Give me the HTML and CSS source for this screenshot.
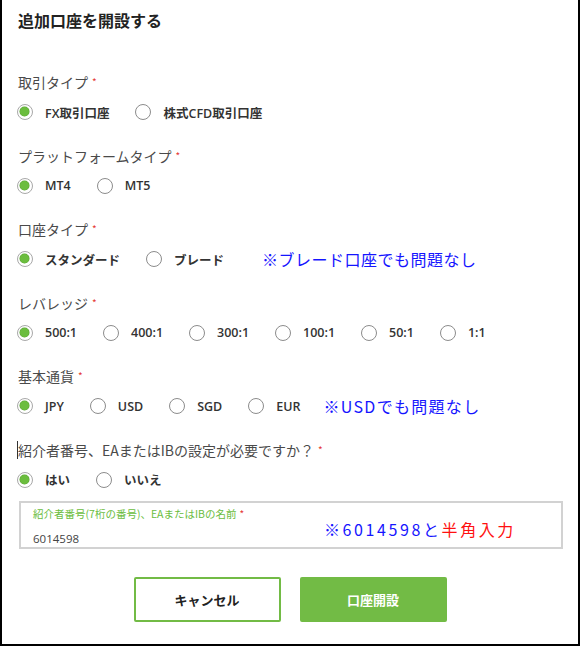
FILE: index.html
```html
<!DOCTYPE html>
<html lang="ja">
<head>
<meta charset="utf-8">
<title>追加口座を開設する</title>
<link rel="stylesheet" href="styles.css">
</head>
<body>
<div class="frame">
  <h1 class="title">追加口座を開設する</h1>

  <div class="group">
    <div class="label">取引タイプ<span class="req">*</span></div>
    <div class="options">
      <label class="opt"><span class="radio checked"></span>FX取引口座</label>
      <label class="opt"><span class="radio"></span>株式CFD取引口座</label>
    </div>
  </div>

  <div class="group">
    <div class="label">プラットフォームタイプ<span class="req">*</span></div>
    <div class="options">
      <label class="opt"><span class="radio checked"></span>MT4</label>
      <label class="opt"><span class="radio"></span>MT5</label>
    </div>
  </div>

  <div class="group">
    <div class="label">口座タイプ<span class="req">*</span></div>
    <div class="options">
      <label class="opt"><span class="radio checked"></span>スタンダード</label>
      <label class="opt"><span class="radio"></span>ブレード</label>
      <span class="note note-blade">※ブレード口座でも問題なし</span>
    </div>
  </div>

  <div class="group">
    <div class="label">レバレッジ<span class="req">*</span></div>
    <div class="options">
      <label class="opt"><span class="radio checked"></span>500:1</label>
      <label class="opt"><span class="radio"></span>400:1</label>
      <label class="opt"><span class="radio"></span>300:1</label>
      <label class="opt"><span class="radio"></span>100:1</label>
      <label class="opt"><span class="radio"></span>50:1</label>
      <label class="opt"><span class="radio"></span>1:1</label>
    </div>
  </div>

  <div class="group">
    <div class="label">基本通貨<span class="req">*</span></div>
    <div class="options">
      <label class="opt"><span class="radio checked"></span>JPY</label>
      <label class="opt"><span class="radio"></span>USD</label>
      <label class="opt"><span class="radio"></span>SGD</label>
      <label class="opt"><span class="radio"></span>EUR</label>
      <span class="note note-usd">※USDでも問題なし</span>
    </div>
  </div>

  <div class="group last">
    <div class="label"><span class="caret"></span>紹介者番号、EAまたはIBの設定が必要ですか？<span class="req">*</span></div>
    <div class="options">
      <label class="opt"><span class="radio checked"></span>はい</label>
      <label class="opt"><span class="radio"></span>いいえ</label>
    </div>
  </div>

  <div class="field">
    <div class="field-label">紹介者番号(7桁の番号)、EAまたはIBの名前<span class="req">*</span></div>
    <div class="field-value">6014598</div>
    <div class="field-note">※6014598と<span class="red">半角入力</span></div>
  </div>

  <div class="actions">
    <button class="btn btn-cancel" type="button">キャンセル</button>
    <button class="btn btn-submit" type="button">口座開設</button>
  </div>
</div>
</body>
</html>
```

FILE: styles.css
```css
* { box-sizing: border-box; }

html, body {
  margin: 0;
  padding: 0;
  background: #fff;
}

body {
  font-family: "Noto Sans CJK JP", "Noto Sans", sans-serif;
  color: #444;
}

.frame {
  width: 580px;
  height: 646px;
  border-left: 2px solid #000;
  border-right: 2px solid #000;
  border-bottom: 2px solid #000;
  padding: 10px 0 0 15px;
  background: #fff;
}

.title {
  margin: 0 0 42px 1px;
  font-size: 16px;
  line-height: 20px;
  font-weight: 700;
  color: #222;
}

.group {
  margin-bottom: 23.5px;
}

.group.last {
  margin-bottom: 11.5px;
}

.label {
  display: flex;
  align-items: center;
  height: 20px;
  margin: 0 0 10px 1px;
  font-size: 14px;
  line-height: 20px;
  color: #4a4a4a;
  white-space: nowrap;
}

.caret {
  display: inline-block;
  width: 1px;
  height: 18px;
  background: #333;
  margin-left: -1px;
}

.req {
  color: #e53935;
  font-size: 10px;
  line-height: 10px;
  margin-left: 4px;
  align-self: flex-start;
  margin-top: 5px;
}

.options {
  display: flex;
  align-items: center;
  height: 20px;
}

.opt {
  display: flex;
  align-items: center;
  margin-right: 26px;
  font-family: "Open Sans", "Noto Sans CJK JP", sans-serif;
  font-size: 12.5px;
  font-weight: 600;
  color: #333;
  white-space: nowrap;
}

.radio {
  position: relative;
  width: 16px;
  height: 16px;
  margin: 0 12px 0 0;
  border: 1.5px solid #8c8c8c;
  border-radius: 50%;
  background: #fff;
  flex: none;
}

.radio.checked {
  border-color: #a8a8a8;
}

.radio.checked::after {
  content: "";
  position: absolute;
  left: 2px;
  top: 2px;
  width: 9px;
  height: 9px;
  border-radius: 50%;
  background: #6bbd3e;
  box-shadow: 0 0 0 0.5px #5aa334;
}

.note {
  font-family: "Noto Sans CJK JP", sans-serif;
  font-size: 16px;
  line-height: 20px;
  letter-spacing: 0.5px;
  color: #1515ff;
  white-space: nowrap;
}

.note-blade { margin-left: 12px; }
.note-usd { margin-left: -3px; letter-spacing: 1.3px; }

.field {
  display: grid;
  grid-template-columns: 291px 1fr;
  grid-template-rows: 20px 16px;
  row-gap: 8px;
  width: 544px;
  height: 48px;
  margin-left: 2px;
  padding: 0 12px;
  border: 2px solid #d2d2d2;
}

.field-label {
  grid-column: 1 / 3;
  grid-row: 1;
  font-size: 10.5px;
  line-height: 21px;
  color: #6bbd3e;
  white-space: nowrap;
}

.field-label .req {
  font-size: 10px;
  margin-left: 3px;
  margin-top: 0;
  vertical-align: baseline;
}

.field-value {
  grid-column: 1;
  grid-row: 2;
  font-family: "Open Sans", sans-serif;
  font-size: 11.5px;
  line-height: 16px;
  color: #444;
}

.field-note {
  grid-column: 2;
  grid-row: 1 / 3;
  align-self: start;
  margin-top: 16px;
  font-size: 16px;
  line-height: 20px;
  letter-spacing: 2.6px;
  color: #1515ff;
  white-space: nowrap;
}

.red { color: #ff1010; }

.actions {
  display: flex;
  justify-content: center;
  gap: 19px;
  margin-top: 28px;
  padding-right: 15px;
}

.btn {
  width: 147px;
  height: 45px;
  border-radius: 2px;
  font-family: "Noto Sans CJK JP", sans-serif;
  font-size: 13px;
  font-weight: 700;
  cursor: pointer;
}

.btn-cancel {
  background: #fff;
  border: 2px solid #72bb45;
  color: #222;
}

.btn-submit {
  background: #72bb45;
  border: 2px solid #72bb45;
  color: #fff;
}
```
